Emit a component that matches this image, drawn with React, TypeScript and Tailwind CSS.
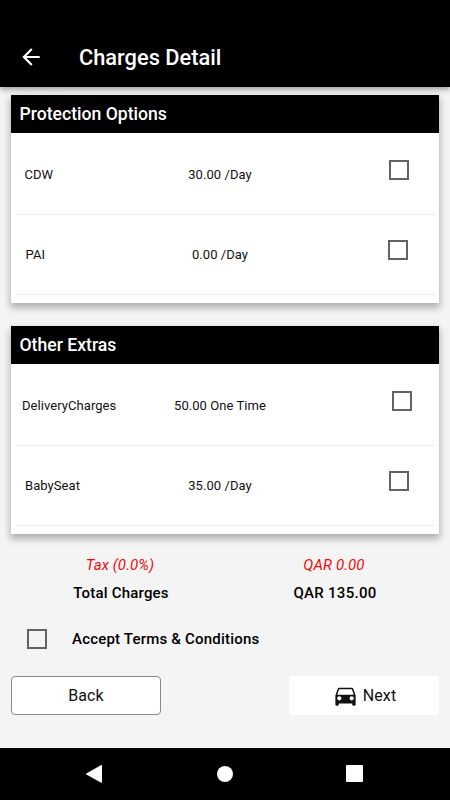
import React, { useState } from 'react';

interface Charge {
  name: string;
  price: string;
  namePad: string;
  boxPad: string;
}

const protectionOptions: Charge[] = [
  { name: 'CDW', price: '30.00 /Day', namePad: 'pl-[9px]', boxPad: 'pr-[26px]' },
  { name: 'PAI', price: '0.00 /Day', namePad: 'pl-[10px]', boxPad: 'pr-[26.6px]' },
];

const otherExtras: Charge[] = [
  { name: 'DeliveryCharges', price: '50.00 One Time', namePad: 'pl-[6.5px]', boxPad: 'pr-[23px]' },
  { name: 'BabySeat', price: '35.00 /Day', namePad: 'pl-[9.5px]', boxPad: 'pr-[26px]' },
];

const Checkbox: React.FC<{ label: string }> = ({ label }) => {
  const [checked, setChecked] = useState(false);

  return (
    <button
      role="checkbox"
      aria-checked={checked}
      aria-label={label}
      onClick={() => setChecked(!checked)}
      className={`block h-5 w-5 shrink-0 border-2 border-[#636363] ${checked ? 'bg-[#636363]' : ''}`}
    />
  );
};

const ChargeCard: React.FC<{ title: string; items: Charge[] }> = ({ title, items }) => (
  <section className="h-[208.3px] bg-white shadow-[0_4px_7px_1px_rgba(0,0,0,0.28)]">
    <h2 className="flex h-[38px] items-center bg-black pl-[8.5px] text-[17.6px] font-medium text-white">
      {title}
    </h2>
    <ul className="mx-[4.5px] pt-[2px]">
      {items.map((item) => (
        <li
          key={item.name}
          className="grid h-20 grid-cols-[134px_1fr_134px] border-b border-[#ebebeb] text-[13px] tracking-[0.06px] text-[#111]"
        >
          <span className={`pt-[30px] ${item.namePad}`}>{item.name}</span>
          <span className="pt-[30px] pr-[10px] text-center">{item.price}</span>
          <span className={`flex justify-end pt-[25px] ${item.boxPad}`}>
            <Checkbox label={item.name} />
          </span>
        </li>
      ))}
    </ul>
  </section>
);

export default function App() {
  return (
    <div className="flex h-[800px] w-[450px] flex-col overflow-hidden bg-[#f4f4f4] font-['Roboto',sans-serif] leading-[20px] text-black">
      <header className="z-10 flex h-[87px] shrink-0 items-center bg-black pt-[27px] pl-[18px] text-white shadow-[0_2px_6px_rgba(0,0,0,0.4)]">
        <button aria-label="Go back">
          <svg className="h-[26px] w-[26px]" viewBox="0 0 24 24" fill="currentColor">
            <path d="M20 11H7.83l5.59-5.59L12 4l-8 8 8 8 1.41-1.41L7.83 13H20v-2z" />
          </svg>
        </button>
        <h1 className="pt-[2px] pl-[35px] text-[21.8px] font-medium">Charges Detail</h1>
      </header>

      <main className="flex grow flex-col px-[11px] pt-2">
        <ChargeCard title="Protection Options" items={protectionOptions} />
        <div className="h-[22.4px]" />
        <ChargeCard title="Other Extras" items={otherExtras} />

        <div className="mt-[21px] grid grid-cols-[219px_1fr] text-center">
          <span className="pr-px text-[15px] tracking-[0.1px] text-[#f00a0a] italic">Tax (0.0%)</span>
          <span className="pr-px text-[15px] tracking-[0.1px] text-[#f00a0a] italic">QAR 0.00</span>
          <span className="pt-2 pl-px text-[15px] font-medium tracking-[0.2px]">Total Charges</span>
          <span className="pt-2 pl-px text-[15px] font-medium tracking-[0.3px]">QAR 135.00</span>
        </div>

        <div className="mt-[26.3px] flex items-center pl-4">
          <Checkbox label="Accept Terms & Conditions" />
          <span className="pl-[25px] text-[15px] font-medium tracking-[0.2px]">Accept Terms &amp; Conditions</span>
        </div>

        <div className="mt-[27px] flex justify-between text-[16px] tracking-[0.1px] text-[#111]">
          <button className="h-[38.5px] w-[150px] rounded-[4px] border border-[#8a8a8a] bg-white">Back</button>
          <button className="flex h-[38.5px] w-[150px] items-center justify-center gap-1 rounded-[4px] bg-white">
            <svg className="h-[27px] w-[27px]" viewBox="0 0 24 24" fill="currentColor">
              <path d="M18.92 6.01C18.72 5.42 18.16 5 17.5 5h-11c-.66 0-1.21.42-1.42 1.01L3 12v8c0 .55.45 1 1 1h1c.55 0 1-.45 1-1v-1h12v1c0 .55.45 1 1 1h1c.55 0 1-.45 1-1v-8l-2.08-5.99zM6.5 16.4a1.9 1.9 0 1 1 0-3.8 1.9 1.9 0 0 1 0 3.8zm11 0a1.9 1.9 0 1 1 0-3.8 1.9 1.9 0 0 1 0 3.8zM4.7 11.4l1.6-5h11.4l1.6 5H4.7z" />
            </svg>
            Next
          </button>
        </div>
      </main>

      <nav className="flex h-[52.5px] shrink-0 items-center justify-between bg-black pr-[87px] pl-[86px] text-white">
        <svg className="h-[18px] w-4" viewBox="0 0 16 18" fill="currentColor">
          <path d="M15.2 0Q16 0 16 .8v16.4q0 .8-.8.6L.4 9.5Q-.2 9 .4 8.5z" />
        </svg>
        <span className="ml-px h-4 w-4 rounded-full bg-white" />
        <span className="h-[17px] w-[17px] rounded-[1px] bg-white" />
      </nav>
    </div>
  );
}
